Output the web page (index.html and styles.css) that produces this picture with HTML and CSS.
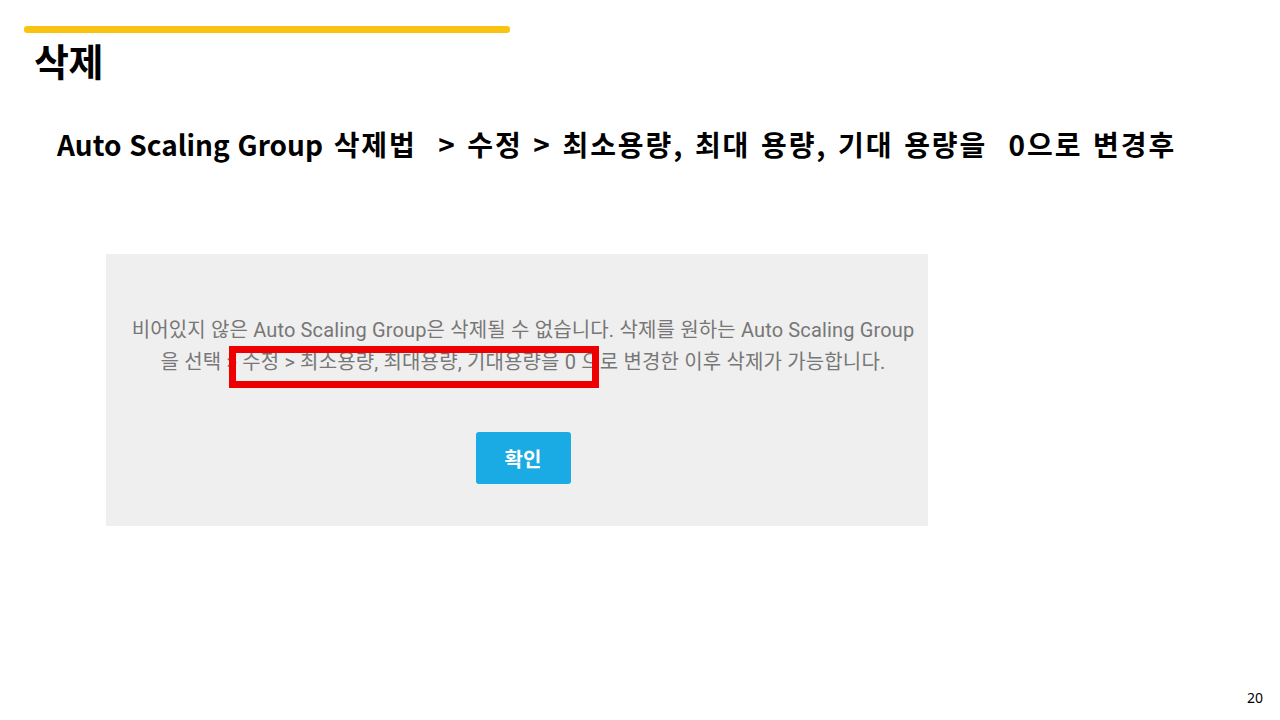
FILE: index.html
```html
<!DOCTYPE html>
<html lang="ko">
<head>
<meta charset="utf-8">
<title>삭제</title>
<link rel="stylesheet" href="styles.css">
</head>
<body>
<div class="slide">
  <header class="head">
    <div class="accent"></div>
    <h1 class="title">삭제</h1>
  </header>
  <p class="subtitle"><span class="latin">Auto Scaling Group</span> 삭제법&nbsp; &gt; 수정 &gt; 최소용량, 최대 용량, 기대 용량을&nbsp; 0으로 변경후</p>
  <div class="shot">
    <div class="dialog">
      <p class="msg">비어있지 않은 Auto Scaling Group은 삭제될 수 없습니다. 삭제를 원하는 Auto Scaling Group<br>을 선택 &gt; 수정 &gt; 최소용량, 최대용량, 기대용량을 0 으로 변경한 이후 삭제가 가능합니다.</p>
      <button class="ok">확인</button>
      <div class="highlight"></div>
    </div>
  </div>
  <footer class="foot"><span class="page">20</span></footer>
</div>
</body>
</html>
```
FILE: styles.css
```css
html, body {
  margin: 0;
  padding: 0;
  background: #ffffff;
}
.slide {
  width: 1280px;
  height: 720px;
  display: flex;
  flex-direction: column;
  font-family: "Noto Sans CJK KR", "Noto Sans", sans-serif;
  color: #000;
  box-sizing: border-box;
}
.head {
  padding: 26px 0 0 24px;
}
.accent {
  width: 486px;
  height: 7px;
  border-radius: 3px;
  background: #fac30f;
}
.title {
  margin: 2px 0 0 10px;
  font-size: 38px;
  font-weight: 700;
  line-height: 50px;
  letter-spacing: -0.5px;
}
.subtitle {
  margin: 40px 0 0 57px;
  font-size: 28px;
  font-weight: 700;
  line-height: 38px;
  letter-spacing: 1.9px;
  word-spacing: 1px;
}
.latin {
  letter-spacing: 0;
  word-spacing: 0;
}
.shot {
  margin: 91px 0 0 106px;
}
.dialog {
  position: relative;
  width: 822px;
  height: 272px;
  background: #efefef;
  display: flex;
  flex-direction: column;
  align-items: center;
  box-sizing: border-box;
  padding: 60px 0 0 12px;
}
.msg {
  margin: 0;
  text-align: center;
  font-family: Roboto, "Noto Sans CJK KR", sans-serif;
  font-size: 20px;
  line-height: 32px;
  color: #777777;
  letter-spacing: 0.15px;
}
.ok {
  margin: 54px 0 0 0;
  width: 95px;
  height: 52px;
  border: none;
  border-radius: 3px;
  background: #1aabe5;
  color: #fff;
  font-family: "Noto Sans CJK KR", sans-serif;
  font-size: 20px;
  font-weight: 700;
  padding: 0;
}
.highlight {
  position: absolute;
  left: 123px;
  top: 92px;
  width: 370px;
  height: 42px;
  border: 7px solid #ee0000;
  box-sizing: border-box;
}
.foot {
  margin-top: auto;
  display: flex;
  justify-content: flex-end;
  padding: 0 17px 13px 0;
}
.page {
  font-family: "Noto Sans", sans-serif;
  font-size: 14px;
  color: #000;
}
```
